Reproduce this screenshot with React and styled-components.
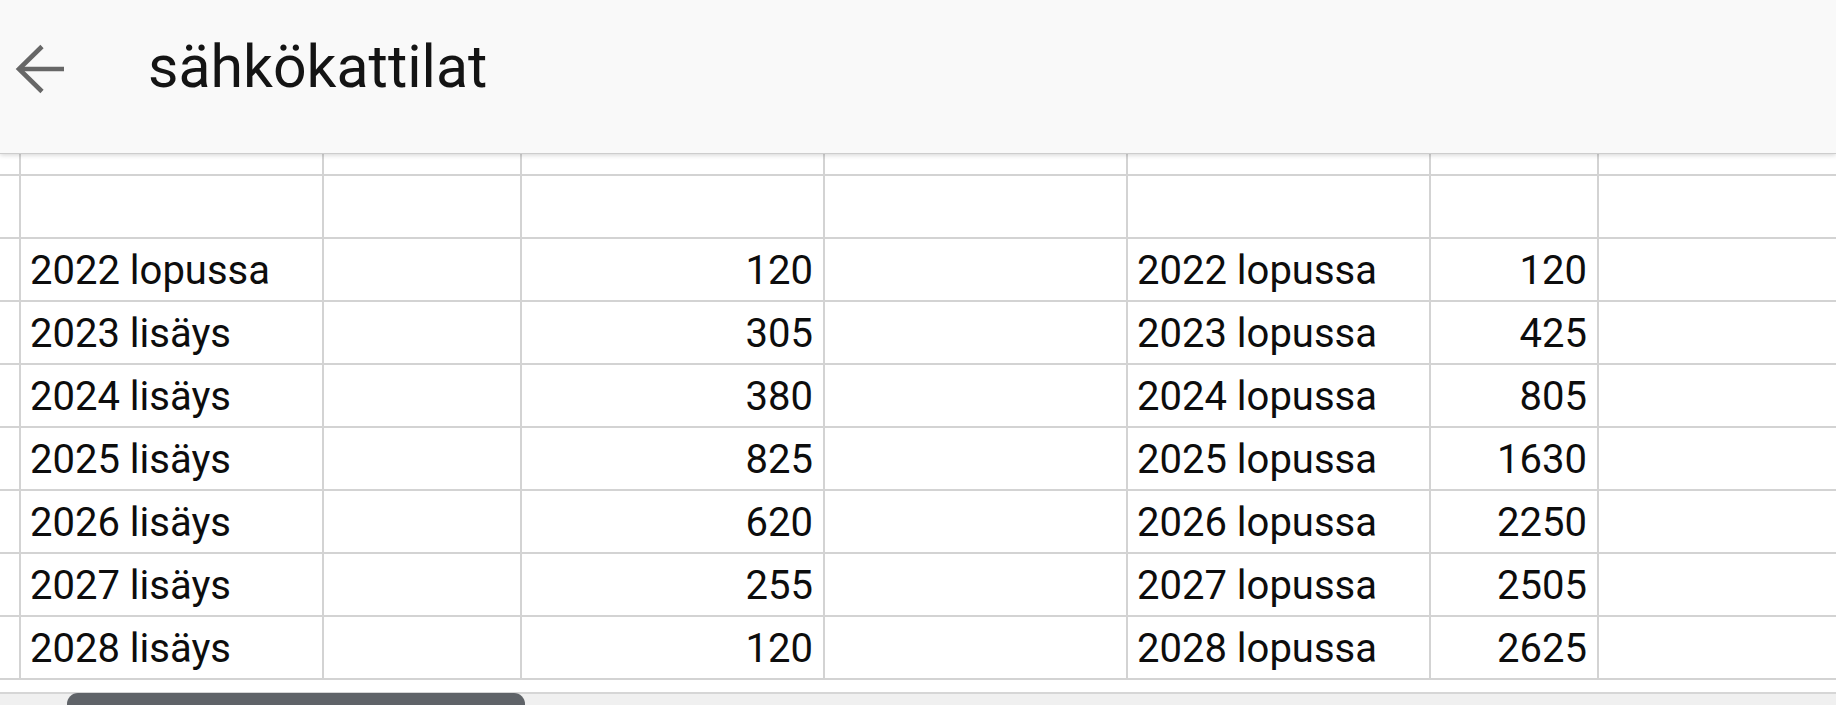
import React from 'react'
import styled, { createGlobalStyle } from 'styled-components'

const GlobalStyle = createGlobalStyle`
  html, body {
    margin: 0;
    padding: 0;
    background: #ffffff;
  }
  body {
    font-family: Roboto, 'Liberation Sans', sans-serif;
    overflow: hidden;
  }
`

const colWidths = [20, 303, 198, 303, 303, 303, 168]

const rows = [
  ['2022 lopussa', '120', '2022 lopussa', '120'],
  ['2023 lisäys', '305', '2023 lopussa', '425'],
  ['2024 lisäys', '380', '2024 lopussa', '805'],
  ['2025 lisäys', '825', '2025 lopussa', '1630'],
  ['2026 lisäys', '620', '2026 lopussa', '2250'],
  ['2027 lisäys', '255', '2027 lopussa', '2505'],
  ['2028 lisäys', '120', '2028 lopussa', '2625'],
]

const Screen = styled.main`
  width: 1836px;
  height: 705px;
  display: flex;
  flex-direction: column;
  overflow: hidden;
  background: #ffffff;
`

const AppBar = styled.header`
  position: relative;
  z-index: 2;
  height: 153px;
  flex: none;
  display: flex;
  align-items: flex-start;
  background: #f9f9f9;
  box-shadow: 0 1px 0 #cdcdcd, 0 2px 5px rgba(0, 0, 0, 0.18);
`

const BackButton = styled.button`
  border: none;
  background: none;
  padding: 0;
  margin: 44px 0 0 15px;
  width: 50px;
  height: 50px;
  display: flex;
  cursor: pointer;
`

const Title = styled.h1`
  margin: 32px 0 0 83px;
  font-family: Roboto, 'Liberation Sans', sans-serif;
  font-weight: 400;
  font-size: 59px;
  line-height: 70px;
  color: #141414;
`

const Sheet = styled.section`
  flex: none;
  display: flex;
  flex-direction: column;
`

const Row = styled.div`
  display: flex;
  height: ${(p) => p.$height}px;
  border-bottom: 2px solid #d3d3d3;
  box-sizing: content-box;
`

const Cell = styled.div`
  box-sizing: border-box;
  flex: ${(p) => (p.$width ? `0 0 ${p.$width}px` : '1 1 auto')};
  border-right: ${(p) => (p.$width ? '2px solid #d3d3d3' : 'none')};
  display: flex;
  align-items: flex-end;
  justify-content: ${(p) => (p.$num ? 'flex-end' : 'flex-start')};
  padding: 0 10px 7px 9px;
  font-size: 40px;
  line-height: 44px;
  color: #0d0d0d;
  white-space: nowrap;
  overflow: hidden;
`

const Gap = styled.div`
  height: 12px;
  flex: none;
`

const ScrollTrack = styled.div`
  flex: 1;
  border-top: 2px solid #d6d6d6;
  background: #f0f0f0;
  position: relative;
`

const ScrollThumb = styled.div`
  position: absolute;
  left: 67px;
  top: -1px;
  width: 458px;
  height: 40px;
  background: #5f6368;
  border-radius: 11px 11px 0 0;
`

function BackArrow() {
  return (
    <svg width="50" height="50" viewBox="0 0 50 50" fill="none">
      <path d="M49 25H4" stroke="#676767" strokeWidth="4.6" />
      <path d="M27 2.5L4 25l23 22.5" stroke="#676767" strokeWidth="4.6" strokeLinejoin="miter" />
    </svg>
  )
}

function SheetRow({ height, values }) {
  const cells = values || []
  const content = [null, cells[0], null, cells[1], null, cells[2], cells[3]]
  const numeric = [false, false, false, true, false, false, true]
  return (
    <Row $height={height}>
      {colWidths.map((w, i) => (
        <Cell key={i} $width={w} $num={numeric[i]}>
          {content[i]}
        </Cell>
      ))}
      <Cell />
    </Row>
  )
}

export default function App() {
  return (
    <>
      <GlobalStyle />
      <Screen>
        <AppBar>
          <BackButton aria-label="Takaisin">
            <BackArrow />
          </BackButton>
          <Title>sähkökattilat</Title>
        </AppBar>
        <Sheet>
          <SheetRow height={21} />
          <SheetRow height={61} />
          {rows.map((r, i) => (
            <SheetRow key={i} height={61} values={r} />
          ))}
        </Sheet>
        <Gap />
        <ScrollTrack>
          <ScrollThumb />
        </ScrollTrack>
      </Screen>
    </>
  )
}
